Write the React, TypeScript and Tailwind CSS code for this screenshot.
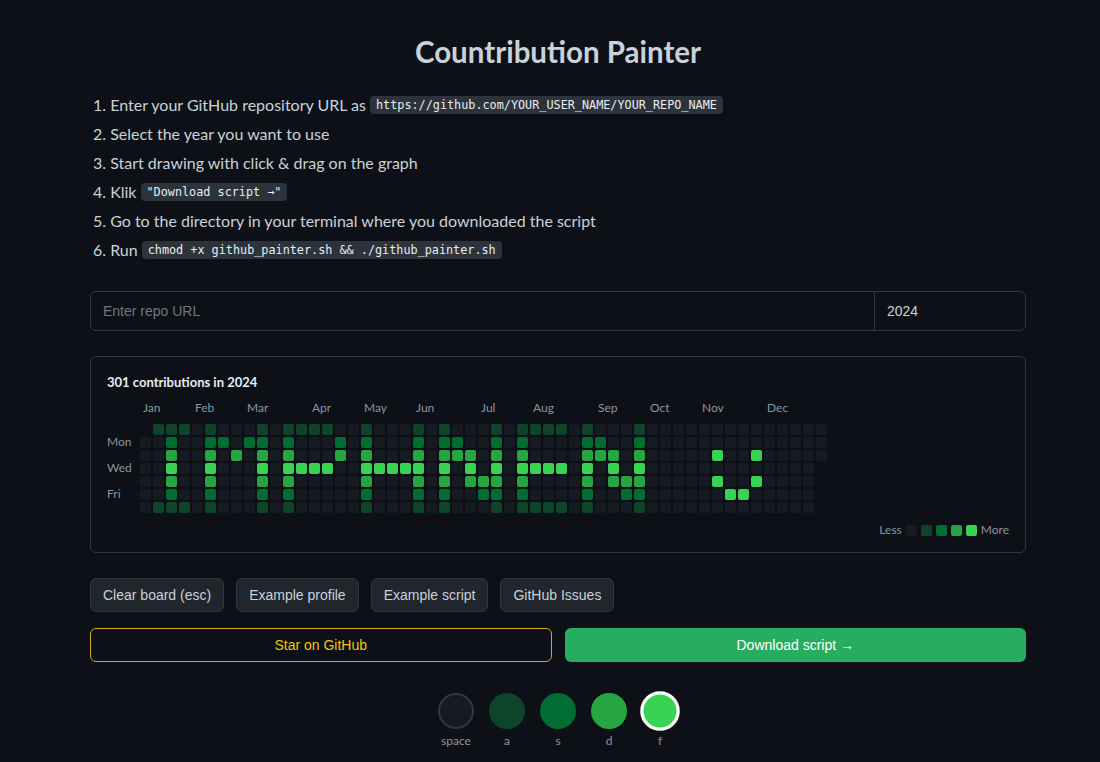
import React from "react";

const LEVELS = ["bg-[#161b22]", "bg-[#0e4429]", "bg-[#006d32]", "bg-[#26a641]", "bg-[#39d353]"];
const ROW_LEVEL = [1, 2, 3, 4, 3, 2, 1];
const ALL = [0, 1, 2, 3, 4, 5, 6];

// painted columns -> rows (letters I M P H N E N)
const LETTERS: Record<number, number[]> = {
  1: [0, 6], 2: ALL, 3: [0, 6],
  5: ALL, 6: [1], 7: [2], 8: [1], 9: ALL,
  11: ALL, 12: [0, 3], 13: [0, 3], 14: [0, 3], 15: [1, 2],
  17: ALL, 18: [3], 19: [3], 20: [3], 21: ALL,
  23: ALL, 24: [1, 2], 25: [2, 3, 4], 26: [4, 5], 27: ALL,
  29: ALL, 30: [0, 3, 6], 31: [0, 3, 6], 32: [0, 3, 6],
  34: ALL, 35: [1, 2], 36: [2, 3, 4], 37: [4, 5], 38: ALL,
};
const SMILE: Record<number, number[]> = { 44: [2, 4], 45: [5], 46: [5], 47: [2, 4] };

const MONTHS = ["Jan", "Feb", "Mar", "Apr", "May", "Jun", "Jul", "Aug", "Sep", "Oct", "Nov", "Dec"];
const YEAR = 2024;
const START_DOW = new Date(YEAR, 0, 1).getDay(); // 1 = Monday
const DAYS = 366;

const levelFor = (col: number, row: number) => {
  if (SMILE[col]?.includes(row)) return 4;
  if (LETTERS[col]?.includes(row)) return ROW_LEVEL[row];
  return 0;
};

const monthCols = MONTHS.map((m, i) => {
  const doy = Math.round((new Date(YEAR, i, 1).getTime() - new Date(YEAR, 0, 1).getTime()) / 86400000);
  return { m, col: Math.floor((doy + START_DOW) / 7) };
});

const Code: React.FC<{ children: React.ReactNode }> = ({ children }) => (
  <code className="ml-[4px] inline-block bg-[#2d333b] text-[#e6edf3] rounded-[4px] px-[6px] py-[1px] text-[11.8px] leading-[16px] font-['DejaVu_Sans_Mono',monospace]">
    {children}
  </code>
);

const Graph = () => {
  const cells = [];
  for (let col = 0; col < 53; col++) {
    for (let row = 0; row < 7; row++) {
      const idx = col * 7 + row - START_DOW;
      const valid = idx >= 0 && idx < DAYS;
      cells.push(
        <div
          key={`${col}-${row}`}
          className={`w-[11px] h-[11px] rounded-[2px] ${valid ? LEVELS[levelFor(col, row)] : "bg-transparent"}`}
        />
      );
    }
  }

  return (
    <div className="mt-[25px] border border-[#30363d] rounded-md pt-[15px] pb-[14px] px-4">
      <h2 className="text-[13px] leading-5 font-bold text-[#e6edf3]">301 contributions in {YEAR}</h2>
      <div className="flex mt-2">
        <div className="w-[33px]" />
        <div className="grid grid-cols-[repeat(53,11px)] gap-x-[2px] h-4 text-[12px] leading-4 text-[#8b949e]">
          {monthCols.map(({ m, col }) => (
            <span key={m} className="whitespace-nowrap pl-[3px]" style={{ gridColumnStart: col + 1, gridRowStart: 1 }}>
              {m}
            </span>
          ))}
        </div>
      </div>
      <div className="flex mt-2">
        <div className="w-[33px] grid grid-rows-[repeat(7,11px)] gap-y-[2px] text-[12px] text-[#8b949e]">
          {["", "Mon", "", "Wed", "", "Fri", ""].map((d, i) => (
            <span key={i} className="leading-[11px] -mt-[1px]">{d}</span>
          ))}
        </div>
        <div className="grid grid-flow-col grid-rows-[repeat(7,11px)] auto-cols-[11px] gap-[2px]">{cells}</div>
      </div>
      <div className="mt-[9px] flex justify-end items-center gap-1 text-[12px] leading-4 text-[#8b949e]">
        <span>Less</span>
        {LEVELS.map((l) => (
          <div key={l} className={`w-[11px] h-[11px] rounded-[2px] ${l}`} />
        ))}
        <span>More</span>
      </div>
    </div>
  );
};

const PALETTE = [
  { key: "space", cls: "bg-[#161b22] border-2 border-[#30363d]" },
  { key: "a", cls: "bg-[#0e4429]" },
  { key: "s", cls: "bg-[#006d32]" },
  { key: "d", cls: "bg-[#26a641]" },
  { key: "f", cls: "bg-[#39d353] border-[3px] border-white scale-110" },
];

const STEPS: React.ReactNode[] = [
  <>1. Enter your GitHub repository URL as<Code>https://github.com/YOUR_USER_NAME/YOUR_REPO_NAME</Code></>,
  <>2. Select the year you want to use</>,
  <>3. Start drawing with click &amp; drag on the graph</>,
  <>4. Klik<Code>"Download script →"</Code></>,
  <>5. Go to the directory in your terminal where you downloaded the script</>,
  <>6. Run<Code>chmod +x github_painter.sh &amp;&amp; ./github_painter.sh</Code></>,
];

export default function App() {
  return (
    <div className="min-h-screen bg-[#0d1117] pl-4 font-['Lato',sans-serif] text-[#c9d1d9]">
      <div className="mx-auto w-[936px] pt-[30px] pb-4">
        <h1 className="text-center text-[29.5px] leading-[44px] font-bold text-[#c9d1d9]">Countribution Painter</h1>

        <ol className="mt-4 pl-[3px] text-[16px]">
          {STEPS.map((s, i) => (
            <li key={i} className="h-[29px] flex items-center whitespace-nowrap">{s}</li>
          ))}
        </ol>

        <div className="mt-[27px] flex h-10 border border-[#30363d] rounded-md font-['Liberation_Sans',sans-serif] text-[14px]">
          <input
            className="flex-1 bg-transparent px-3 outline-none placeholder:text-[#6e7681] text-[#c9d1d9]"
            placeholder="Enter repo URL"
          />
          <div className="w-[151px] border-l border-[#30363d] flex items-center px-3 text-[#c9d1d9]">{YEAR}</div>
        </div>

        <Graph />

        <div className="mt-[25px] flex gap-3 font-['Liberation_Sans',sans-serif] text-[14px]">
          {["Clear board (esc)", "Example profile", "Example script", "GitHub Issues"].map((b) => (
            <button key={b} className="h-[34px] px-3 rounded-md bg-[#21262d] border border-[#30363d] text-[#c9d1d9]">
              {b}
            </button>
          ))}
        </div>

        <div className="mt-4 grid grid-cols-2 gap-[13px] font-['Liberation_Sans',sans-serif] text-[14px]">
          <button className="h-[34px] rounded-md border border-[#d4a72c] text-[#f2c40f]">Star on GitHub</button>
          <button className="h-[34px] rounded-md bg-[#26ad5f] text-white">Download script →</button>
        </div>

        <div className="mt-[31px] flex justify-center gap-[15px]">
          {PALETTE.map((p) => (
            <div key={p.key} className="flex flex-col items-center w-9">
              <div className={`w-9 h-9 rounded-full ${p.cls}`} />
              <span className="mt-[4px] text-[12px] leading-4 text-[#8b949e]">{p.key}</span>
            </div>
          ))}
        </div>
      </div>
    </div>
  );
}
